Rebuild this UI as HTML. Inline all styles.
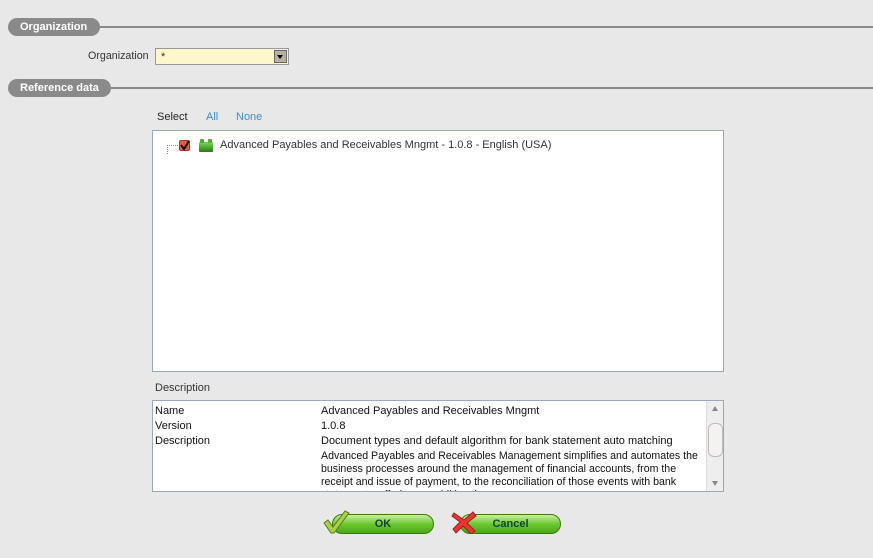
<!DOCTYPE html>
<html><head><style>
body{margin:0;width:873px;height:558px;background:#e8e8e8;font-family:"Liberation Sans",sans-serif;font-size:11px;color:#333;position:relative;overflow:hidden}
.a{position:absolute}
.pill{background:#8a8a8a;color:#fff;font-weight:bold;font-size:11px;border-radius:9px;height:18px;line-height:18px;padding:0 12px}
.line{height:2px;background:#8a8a8a}
.box{background:#fff;border:1px solid #9aa8b8}
.btn{height:18px;border:1px solid #3a7a10;border-radius:10px;background:linear-gradient(#c8f0a0,#6cc830 50%,#4aa818);font-weight:bold;font-size:11px;color:#143;text-align:center;line-height:18px}
</style></head><body>
<div class="a line" style="left:90px;top:26px;width:783px"></div>
<div class="a pill" style="left:8px;top:18px;width:68px">Organization</div>
<div class="a" style="left:88px;top:50px;font-size:10.7px">Organization</div>
<div class="a" style="left:155px;top:48px;width:134px;height:17px;border:1px solid #999;background:#fff7cc;box-sizing:border-box"><span style="position:absolute;left:5px;top:2px">*</span><div style="position:absolute;right:1px;top:1px;width:13px;height:13px;background:#b8b0a0;border:1px solid #666;box-sizing:border-box"><div style="position:absolute;left:2px;top:4px;border-left:3px solid transparent;border-right:3px solid transparent;border-top:4px solid #000"></div></div></div>
<div class="a line" style="left:100px;top:87px;width:773px"></div>
<div class="a pill" style="left:8px;top:79px;width:79px">Reference data</div>
<div class="a" style="left:157px;top:111px;color:#222">Select</div>
<div class="a" style="left:206px;top:111px;color:#3a8ed0">All</div>
<div class="a" style="left:236px;top:111px;color:#3a8ed0">None</div>
<div class="a box" style="left:152px;top:130px;width:570px;height:240px">
 <div class="a" style="left:14px;top:14px;width:12px;height:8px;border-left:1px dotted #888;border-top:1px dotted #888"></div>
 <div class="a" style="left:26px;top:9px;width:11px;height:11px;background:#e85a4a;border:1px solid #a33;border-radius:2px;box-sizing:border-box"></div>
 <svg class="a" style="left:25px;top:7px" width="14" height="14"><path d="M3 7 L6 11 L11 3" stroke="#111" stroke-width="2" fill="none"/></svg>
 <div class="a" style="left:46px;top:11px;width:14px;height:10px;background:linear-gradient(#7d5,#2a7a10);border-radius:1px"></div>
 <div class="a" style="left:47px;top:8px;width:4px;height:4px;background:#5a3;border-radius:1px"></div>
 <div class="a" style="left:55px;top:8px;width:4px;height:4px;background:#5a3;border-radius:1px"></div>
 <div class="a" style="left:67px;top:8px;color:#333">Advanced Payables and Receivables Mngmt - 1.0.8 - English (USA)</div>
</div>
<div class="a" style="left:155px;top:382px">Description</div>
<div class="a box" style="left:152px;top:400px;width:570px;height:90px;overflow:hidden;color:#111;line-height:15px">
 <div class="a" style="left:2px;top:3px">Name<br>Version<br>Description<br><br><br><br>Help</div>
 <div class="a" style="left:168px;top:3px;white-space:nowrap">Advanced Payables and Receivables Mngmt<br>1.0.8<br>Document types and default algorithm for bank statement auto matching<br><span style="line-height:13px;display:block;margin-top:1px;font-size:10.6px">Advanced Payables and Receivables Management simplifies and automates the<br>business processes around the management of financial accounts, from the<br>receipt and issue of payment, to the reconciliation of those events with bank<br>statements, offering an additional</span></div>
 <div class="a" style="right:0;top:0;width:16px;height:90px;background:#eee;border-left:1px solid #ddd">
  <div class="a" style="left:5px;top:5px;border-left:3px solid transparent;border-right:3px solid transparent;border-bottom:5px solid #888"></div>
  <div class="a" style="left:1px;top:22px;width:13px;height:32px;background:#f4f2ee;border:1px solid #bbb;border-radius:6px"></div>
  <div class="a" style="left:5px;bottom:5px;border-left:3px solid transparent;border-right:3px solid transparent;border-top:5px solid #888"></div>
 </div>
</div>
<div class="a btn" style="left:332px;top:514px;width:100px">OK</div>
<svg class="a" style="left:322px;top:509px" width="28" height="26"><path d="M2 14 L6 11 L11 18 L23 2 L27 4 L12 24 L9 24 Z" fill="#a8d048" stroke="#5a7a20" stroke-width="1"/></svg>
<div class="a btn" style="left:460px;top:514px;width:99px">Cancel</div>
<svg class="a" style="left:451px;top:510px" width="26" height="24"><path d="M3 3 L13 10 L22 2 L25 6 L16 13 L24 21 L20 24 L12 16 L5 23 L2 19 L9 12 L1 6 Z" fill="#e33" stroke="#922" stroke-width="1"/></svg>
</body></html>
